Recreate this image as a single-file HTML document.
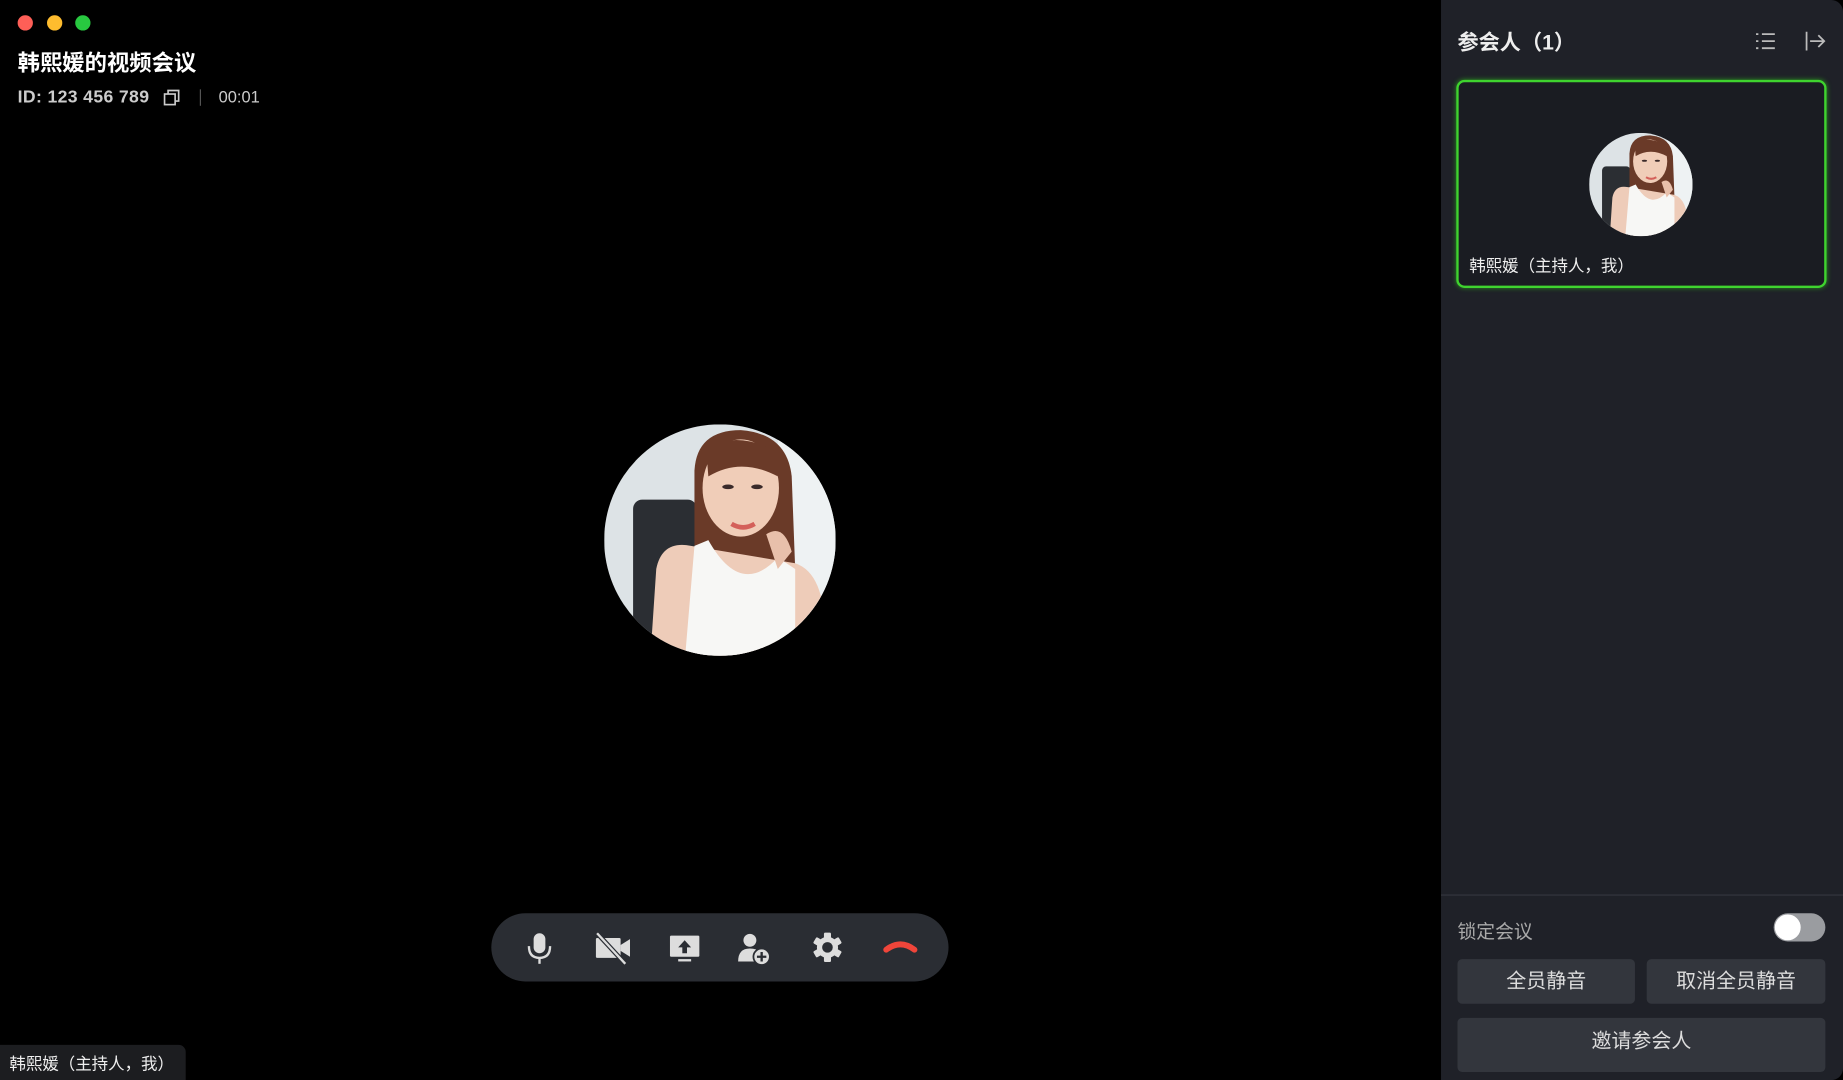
<!DOCTYPE html>
<html><head><meta charset="utf-8">
<style>
html,body{margin:0;padding:0;width:1843px;height:1080px;overflow:hidden;background:#000;}
#w{position:absolute;left:0;top:0;width:1568px;height:919px;transform:scale(1.175383);transform-origin:0 0;background:#000;font-family:"Liberation Sans","Noto Sans CJK SC",sans-serif;color:#fff;}
.a{position:absolute;}
.dot{position:absolute;top:13px;width:13px;height:13px;border-radius:50%;}
.btn{position:absolute;background:#33363d;border-radius:4px;color:#ddd;font-size:17px;text-align:center;}
</style></head><body>
<svg width="0" height="0" style="position:absolute">
<defs>
<clipPath id="cc"><circle cx="100" cy="100" r="100"/></clipPath>
<g id="av">
<g clip-path="url(#cc)">
<rect width="200" height="200" fill="#dde3e6"/>
<rect x="150" y="0" width="50" height="200" fill="#eef2f3"/>
<rect x="25" y="65" width="55" height="150" rx="8" fill="#2b2e33"/>
<path d="M78 40 Q80 5 118 5 Q158 8 162 45 L165 125 L78 125 Z" fill="#6a3a28"/>
<ellipse cx="118" cy="55" rx="33" ry="42" fill="#f0cdb8"/>
<path d="M88 20 Q118 5 150 25 L150 45 Q118 28 90 45 Z" fill="#6a3a28"/>
<path d="M45 125 Q50 100 75 105 L165 120 Q195 130 190 200 L40 200 Z" fill="#eeccb9"/>
<path d="M78 105 L90 100 Q118 150 150 115 L165 125 L165 200 L70 200 Z" fill="#f7f7f5"/>
<path d="M140 95 Q155 85 162 110 L150 125 Z" fill="#e8c0ab"/>
<ellipse cx="107" cy="54" rx="5" ry="2" fill="#3a2a2a"/><ellipse cx="132" cy="54" rx="5" ry="2" fill="#3a2a2a"/>
<path d="M110 86 Q120 92 130 86" stroke="#d4605a" stroke-width="4" fill="none"/>
</g></g>
</defs></svg>
<div id="w">
<div class="dot" style="left:15px;background:#fe5f57"></div>
<div class="dot" style="left:40px;background:#febc2e"></div>
<div class="dot" style="left:64px;background:#28c840"></div>
<div class="a" style="left:15px;top:39px;font-size:19px;font-weight:bold;">韩熙媛的视频会议</div>
<div class="a" style="left:15px;top:74px;font-size:15px;font-weight:bold;color:#ccc;letter-spacing:0.3px;">ID: 123 456 789</div>
<svg class="a" style="left:138px;top:75px" width="16" height="16" viewBox="0 0 16 16" fill="none" stroke="#ccc" stroke-width="1.4"><rect x="2" y="5" width="9" height="9"/><path d="M5 5V2h9v9h-3"/></svg>
<div class="a" style="left:170px;top:76px;width:1px;height:14px;background:#555"></div>
<div class="a" style="left:186px;top:74px;font-size:14px;color:#ccc;">00:01</div>

<svg class="a" style="left:514px;top:361px" width="197" height="197" viewBox="0 0 200 200"><use href="#av"/></svg>

<div class="a" style="left:418px;top:777px;width:389px;height:58px;border-radius:29px;background:#2a2d33;"></div>
<svg class="a" style="left:446px;top:790px" width="340" height="32" viewBox="0 0 340 32">
<g fill="#ddd">
<rect x="8" y="4" width="10" height="17" rx="5"/>
<path d="M4 15 Q4 25 13 25 Q22 25 22 15" stroke="#ddd" stroke-width="2" fill="none"/><rect x="12" y="25" width="2" height="5"/>
<rect x="61" y="8" width="21" height="17" rx="1"/><path d="M82 14 L90 9 V24 L82 19Z"/>
<path d="M62 4 L86 30" stroke="#2a2d33" stroke-width="4"/><path d="M62 4 L86 30" stroke="#ddd" stroke-width="2"/>
<rect x="124" y="6" width="25" height="18" rx="1"/><rect x="131" y="26" width="11" height="2"/>
<path d="M136.5 10 L131 16 H134.5 V21 H138.5 V16 H142Z" fill="#2a2d33"/>
<circle cx="192" cy="10" r="5.5"/><path d="M182 28 Q182 17 192 17 Q198 17 200 20 L200 28Z"/>
<circle cx="202" cy="24" r="7" stroke="#2a2d33" stroke-width="1.5"/><path d="M202 20v8M198 24h8" stroke="#2a2d33" stroke-width="2"/>
<g transform="translate(258,16)">
<circle r="9"/>
<rect x="-3" y="-12.5" width="6" height="25" rx="1"/>
<rect x="-3" y="-12.5" width="6" height="25" rx="1" transform="rotate(60)"/>
<rect x="-3" y="-12.5" width="6" height="25" rx="1" transform="rotate(120)"/>
<circle r="4.5" fill="#2a2d33"/>
</g>
</g>
<path d="M308 18 Q320 9 332 18" stroke="#f0453a" stroke-width="5" fill="none" stroke-linecap="round"/>
</svg>

<div class="a" style="left:0;top:889px;width:158px;height:30px;background:#1c1d20;border-radius:0 6px 0 0;"></div>
<div class="a" style="left:8px;top:895px;font-size:14px;color:#eee;">韩熙媛（主持人，我）</div>

<div class="a" style="left:1226px;top:0;width:342px;height:919px;background:#1f2128;border-radius:0 10px 10px 0;"></div>
<div class="a" style="left:1240px;top:22px;font-size:18px;font-weight:bold;color:#eee;">参会人（1）</div>
<svg class="a" style="left:1492px;top:26px" width="62" height="18" viewBox="0 0 62 18" stroke="#bbb" stroke-width="1.5" fill="none">
<path d="M2 3h2M7 3h11M2 9h2M7 9h11M2 15h2M7 15h11"/>
<path d="M45 1v16M48 9h12M55 4l5 5-5 5"/>
</svg>
<div class="a" style="left:1239px;top:68px;width:311px;height:173px;border:2px solid #3fd32f;border-radius:7px;background:#1a1c22;box-shadow:0 0 4px #2a8a20;"></div>
<svg class="a" style="left:1352px;top:113px" width="88" height="88" viewBox="0 0 200 200"><use href="#av"/></svg>
<div class="a" style="left:1250px;top:216px;font-size:14px;color:#eee;">韩熙媛（主持人，我）</div>

<div class="a" style="left:1226px;top:761px;width:342px;height:1px;background:#34373e"></div>
<div class="a" style="left:1240px;top:779px;font-size:16px;color:#aaa;">锁定会议</div>
<div class="a" style="left:1509px;top:777px;width:44px;height:24px;border-radius:12px;background:#9a9ca0;"></div>
<div class="a" style="left:1510px;top:778px;width:22px;height:22px;border-radius:11px;background:#fff;"></div>
<div class="btn" style="left:1240px;top:816px;width:151px;height:38px;line-height:38px;">全员静音</div>
<div class="btn" style="left:1401px;top:816px;width:152px;height:38px;line-height:38px;">取消全员静音</div>
<div class="btn" style="left:1240px;top:866px;width:313px;height:46px;line-height:40px;">邀请参会人</div>
</div>
</body></html>
